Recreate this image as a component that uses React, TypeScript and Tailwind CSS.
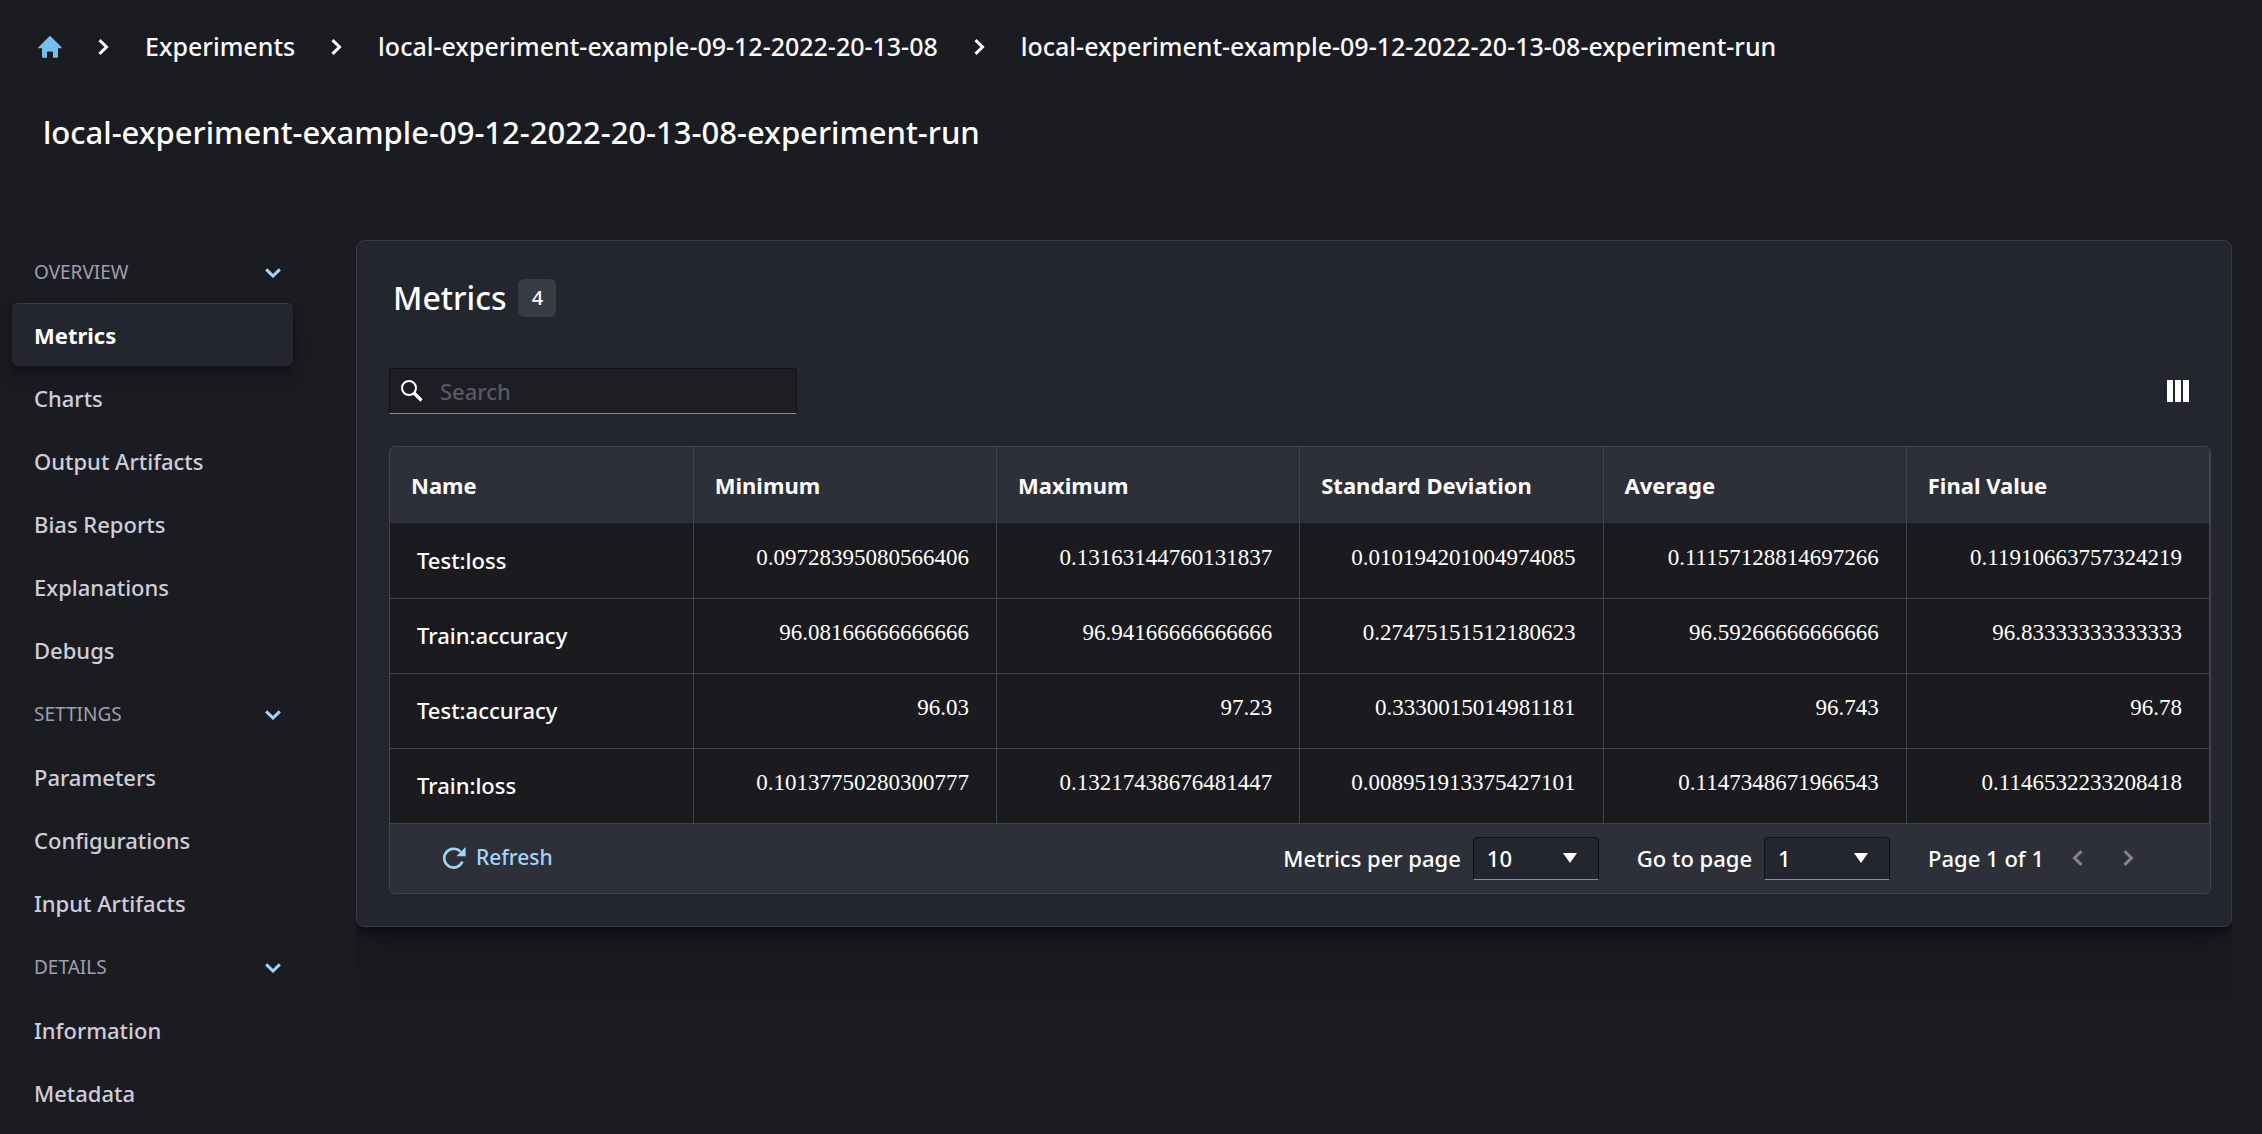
import type { SVGProps } from "react";

const RUN = "local-experiment-example-09-12-2022-20-13-08-experiment-run";

const crumbs = ["Experiments", "local-experiment-example-09-12-2022-20-13-08", RUN];

const sections = [
  {
    title: "OVERVIEW",
    items: ["Metrics", "Charts", "Output Artifacts", "Bias Reports", "Explanations", "Debugs"],
  },
  { title: "SETTINGS", items: ["Parameters", "Configurations", "Input Artifacts"] },
  { title: "DETAILS", items: ["Information", "Metadata"] },
];

const columns = ["Name", "Minimum", "Maximum", "Standard Deviation", "Average", "Final Value"];

const rows = [
  ["Test:loss", "0.09728395080566406", "0.13163144760131837", "0.010194201004974085", "0.11157128814697266", "0.11910663757324219"],
  ["Train:accuracy", "96.08166666666666", "96.94166666666666", "0.27475151512180623", "96.59266666666666", "96.83333333333333"],
  ["Test:accuracy", "96.03", "97.23", "0.3330015014981181", "96.743", "96.78"],
  ["Train:loss", "0.10137750280300777", "0.13217438676481447", "0.008951913375427101", "0.1147348671966543", "0.1146532233208418"],
];

function ChevronRight(props: SVGProps<SVGSVGElement>) {
  return (
    <svg viewBox="0 0 11 16" fill="none" stroke="currentColor" strokeWidth="3" aria-hidden="true" {...props}>
      <path d="M1.5 1.2 L8.5 8 L1.5 14.8" />
    </svg>
  );
}

function HomeIcon() {
  return (
    <svg viewBox="0 0 24 22" className="h-[22px] w-6 fill-[#75bfef]" aria-hidden="true">
      <path d="M11.2.4a1.2 1.2 0 0 1 1.6 0L23.6 11.2v1H20v8.6a1 1 0 0 1-1 1h-4v-5.3a1 1 0 0 0-1-1h-4a1 1 0 0 0-1 1v5.3H5a1 1 0 0 1-1-1v-8.6H.4v-1z" />
    </svg>
  );
}

function Breadcrumbs() {
  return (
    <nav aria-label="Breadcrumb" className="flex h-[94px] items-center pl-[38px] text-[25px] font-medium text-[#fbfafc]">
      <a href="#home" aria-label="Home">
        <HomeIcon />
      </a>
      {crumbs.map((crumb) => (
        <div key={crumb} className="flex items-center">
          <ChevronRight className="mx-9 h-4 w-[11px]" />
          <a href={"#" + crumb} className="whitespace-nowrap">
            {crumb}
          </a>
        </div>
      ))}
    </nav>
  );
}

function Sidebar() {
  return (
    <nav aria-label="Experiment run" className="flex w-[293px] shrink-0 flex-col gap-px pl-3">
      {sections.map((section) => (
        <section key={section.title}>
          <button
            type="button"
            aria-expanded="true"
            className="flex h-[63px] w-full items-center justify-between pt-0.5 pr-3 pl-[22px] text-[19px] text-[#a09fae]"
          >
            {section.title}
            <svg viewBox="0 0 16 10" className="h-2.5 w-4 text-[#a2d5fb]" fill="none" stroke="currentColor" strokeWidth="3" aria-hidden="true">
              <path d="M1.2 1.4 L8 8 L14.8 1.4" />
            </svg>
          </button>
          {section.items.map((item) =>
            item === "Metrics" ? (
              <a
                key={item}
                href="#metrics"
                aria-current="page"
                className="flex h-[63px] items-center rounded-md border-t border-[#373943] bg-[#23262e] pl-[22px] text-[22px] font-bold text-white shadow-[0_4px_8px_rgba(0,0,0,0.35),0_12px_20px_rgba(0,0,0,0.12)]"
              >
                {item}
              </a>
            ) : (
              <a key={item} href={"#" + item} className="flex h-[63px] items-center pt-0.5 pl-[22px] text-[22px] font-medium text-[#cfcdda]">
                {item}
              </a>
            ),
          )}
        </section>
      ))}
    </nav>
  );
}

function PageSelect({ id, label, options }: { id: string; label: string; options: string[] }) {
  return (
    <div className="flex items-center gap-3">
      <label htmlFor={id}>{label}</label>
      <div className="relative">
        <select
          id={id}
          className="block h-[43px] w-[126px] appearance-none rounded-t-sm border border-[#121317] border-b-[#8c8b99] bg-[#23262e] pl-[13px] font-medium"
        >
          {options.map((option) => (
            <option key={option}>{option}</option>
          ))}
        </select>
        <svg viewBox="0 0 14 10" className="pointer-events-none absolute top-4 right-[22px] h-2.5 w-3.5 fill-white" aria-hidden="true">
          <path d="M0 0H14L7 10Z" />
        </svg>
      </div>
    </div>
  );
}

function MetricsTable() {
  return (
    <div className="overflow-hidden rounded-md border border-[#424350] bg-[#2e3039]">
      <table className="w-full table-fixed border-collapse">
        <thead>
          <tr>
            {columns.map((column) => (
              <th
                key={column}
                scope="col"
                className="h-[76px] border-r border-[#424350] pl-[21px] text-left text-[22px] font-bold whitespace-nowrap text-[#fbfafc]"
              >
                {column}
              </th>
            ))}
          </tr>
        </thead>
        <tbody className="bg-[#1b1b1f]">
          {rows.map(([name, ...values]) => (
            <tr key={name} className="h-[75px]">
              <th scope="row" className="border-r border-b border-[#424350] pl-[27px] text-left text-[22px] font-medium">
                {name}
              </th>
              {values.map((value, i) => (
                <td
                  key={i}
                  className="border-r border-b border-[#424350] pr-[27px] pb-1 text-right font-['Liberation_Serif',serif] text-[23px]"
                >
                  {value}
                </td>
              ))}
            </tr>
          ))}
        </tbody>
      </table>
      <div className="flex h-[69px] items-center pr-[76px] pl-[52px] text-[22px] font-medium whitespace-nowrap">
        <button type="button" className="mr-auto flex items-center gap-2.5 text-[21px] text-[#a2d5fb]">
          <svg viewBox="0 0 24 22" className="h-[22px] w-6" fill="none" aria-hidden="true">
            <path d="M20.4 14.6A9.4 9.4 0 1 1 18.4 4.6" stroke="currentColor" strokeWidth="2.6" />
            <path d="M23.6 0V9.2H14.4Z" fill="currentColor" />
          </svg>
          Refresh
        </button>
        <div className="flex items-center gap-[38px]">
          <PageSelect id="per-page" label="Metrics per page" options={["10", "25", "50"]} />
          <PageSelect id="go-to" label="Go to page" options={["1"]} />
          <span>Page 1 of 1</span>
        </div>
        <button type="button" aria-label="Previous page" className="ml-7 text-[#83828f]">
          <ChevronRight className="h-4 w-[11px] rotate-180" />
        </button>
        <button type="button" aria-label="Next page" className="ml-10 text-[#83828f]">
          <ChevronRight className="h-4 w-[11px]" />
        </button>
      </div>
    </div>
  );
}

export default function App() {
  return (
    <div className="min-h-screen bg-[#1b1c21] font-['Noto_Sans',sans-serif] text-white">
      <header className="h-60">
        <Breadcrumbs />
        <h1 className="pt-[15px] pl-[43px] text-[31px] font-medium">{RUN}</h1>
      </header>
      <div className="flex items-start">
        <Sidebar />
        <main className="mr-[30px] ml-[63px] min-w-0 flex-1 rounded-lg border border-[#373943] bg-[#23262e] pt-[38px] pr-5 pb-8 pl-8 shadow-[0_6px_10px_rgba(0,0,0,0.4),0_30px_50px_rgba(0,0,0,0.2)] [clip-path:inset(0_0_-90px_0)]">
          <div className="flex items-center gap-3 pl-1">
            <h2 className="text-[32px] leading-[38px] font-medium">Metrics</h2>
            <span className="flex size-[38px] items-center justify-center rounded-md bg-[#393b47] text-[20px] font-medium">4</span>
          </div>
          <div className="mt-[51px] mb-8 flex items-center justify-between pr-[22px]">
            <div className="relative">
              <input
                type="search"
                aria-label="Search"
                placeholder="Search"
                className="block h-[46px] w-[408px] rounded-t-sm border border-[#121317] border-b-[#8c8b99] bg-[#1d1e23] pl-[50px] text-[22px] font-medium placeholder:text-[#595964]"
              />
              <svg viewBox="0 0 22 22" className="pointer-events-none absolute top-3 left-3 size-[22px]" fill="none" stroke="white" aria-hidden="true">
                <circle cx="8" cy="8" r="7" strokeWidth="2" />
                <path d="M13 13L20.5 20.5" strokeWidth="3.2" />
              </svg>
            </div>
            <button type="button" aria-label="Choose columns">
              <svg viewBox="0 0 22 22" className="size-[22px] fill-white" aria-hidden="true">
                <path d="M0 0H6V22H0ZM8 0H14V22H8ZM16 0H22V22H16Z" />
              </svg>
            </button>
          </div>
          <MetricsTable />
        </main>
      </div>
    </div>
  );
}
